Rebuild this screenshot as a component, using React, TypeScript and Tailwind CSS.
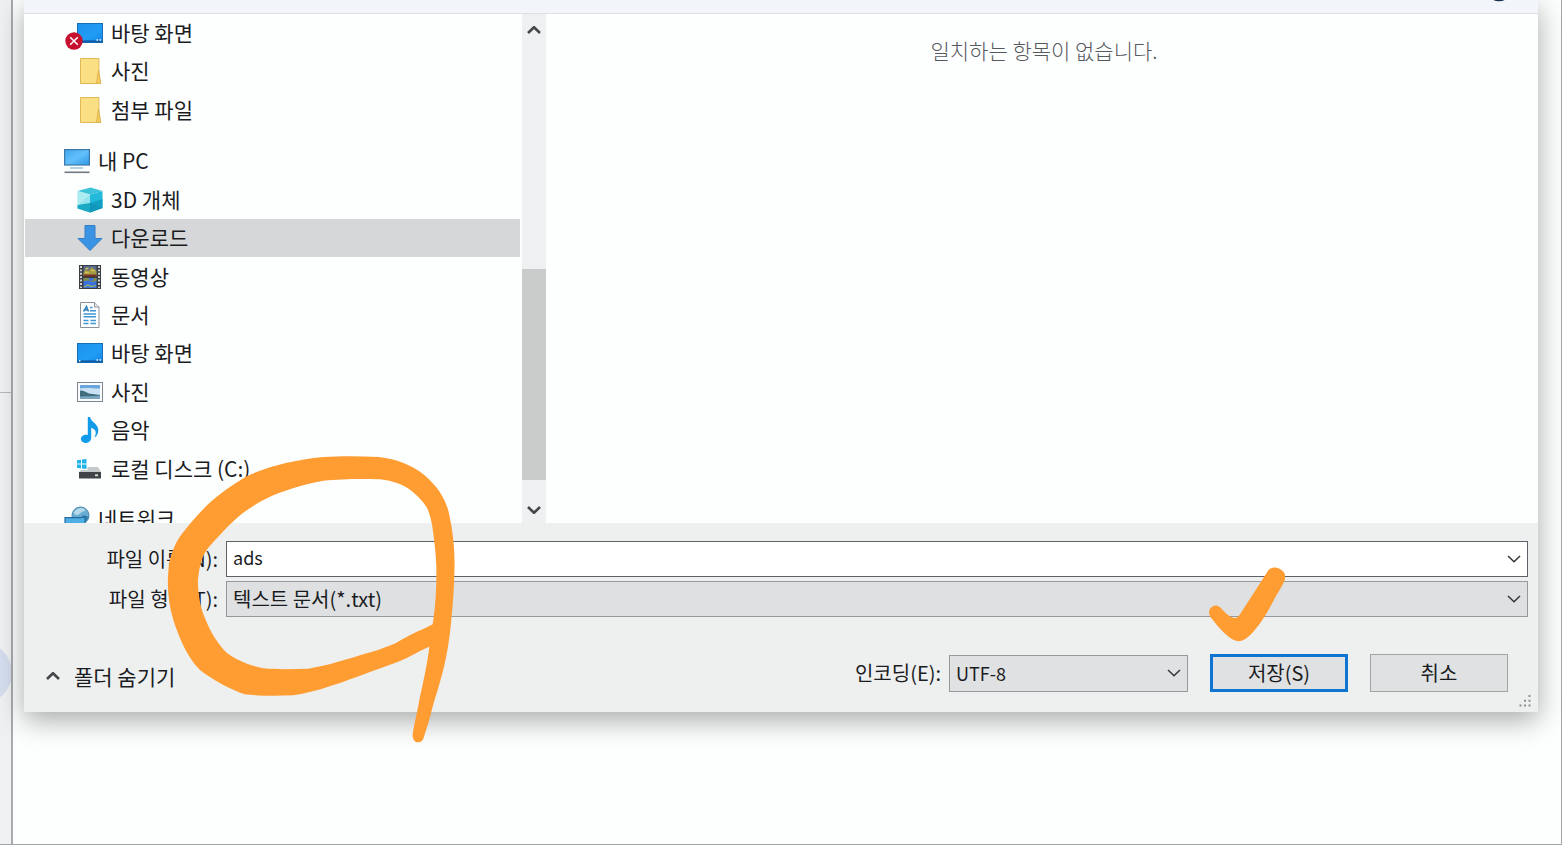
import { useState } from "react";
import type { ReactNode } from "react";

function DesktopIcon() {
  return (
    <svg viewBox="0 0 26 20" className="h-5 w-[26px]" aria-hidden="true">
      <defs>
        <linearGradient id="desk" x1="0" y1="0" x2="1" y2="1">
          <stop offset="0" stopColor="#1c93ee" />
          <stop offset="0.6" stopColor="#219cf4" />
          <stop offset="1" stopColor="#1585e6" />
        </linearGradient>
      </defs>
      <rect x="0.5" y="0.5" width="25" height="19" fill="url(#desk)" stroke="#1a6fb5" />
      <rect x="1" y="17.4" width="24" height="1.8" fill="#0f5ba8" />
      <path d="M2 17.800h1.400M19.500 17h1.600M22.500 17h1.600" stroke="#e8f4ff" strokeWidth="1.400" />
    </svg>
  );
}

function FolderIcon() {
  return (
    <svg viewBox="0 0 26 28" className="h-7 w-[26px]" aria-hidden="true">
      <path d="M3.500 1.500h18.400V17l1.600 9.500H3.500z" fill="#fbdf85" stroke="#e0b954" />
      <path d="M21.500 13 19.500 26.300h4.200z" fill="#f5cd62" stroke="#dbb04a" strokeWidth="0.900" />
    </svg>
  );
}

function PcIcon() {
  return (
    <svg viewBox="0 0 26 26" className="h-[26px] w-[26px]" aria-hidden="true">
      <defs>
        <linearGradient id="pc" x1="0" y1="0" x2="1" y2="1">
          <stop offset="0" stopColor="#3fa6ee" />
          <stop offset="0.500" stopColor="#62c0fb" />
          <stop offset="1" stopColor="#2f98e6" />
        </linearGradient>
      </defs>
      <rect x="0.600" y="1.600" width="24.800" height="15.400" fill="url(#pc)" stroke="#3b78a8" strokeWidth="1.200" />
      <path d="M6 20h13" stroke="#82b7d2" strokeWidth="1.200" />
      <path d="M0.500 24.300h25" stroke="#6d7880" strokeWidth="1.600" />
    </svg>
  );
}

function CubeIcon() {
  return (
    <svg viewBox="0 0 26 26" className="h-[26px] w-[26px]" aria-hidden="true">
      <path d="M0.500 4 13.500 0.500l12 3.500L13 7.500z" fill="#3cc3da" />
      <path d="M0.500 4 13 7.500V25.500L0.500 21.500z" fill="#93e4ec" />
      <path d="M0.500 21.500V18L13 16v9.500z" fill="#1aa9c2" />
      <path d="M0.500 4 13 7.500 0.500 19z" fill="#c3f3f6" opacity="0.550" />
      <path d="M13 7.500 25.500 4v17L13 25.500z" fill="#22b9da" />
      <path d="M13 16l12.500-4v9L13 25.500z" fill="#129fc4" />
      <path d="M13 16l12.500 5L13 25.500z" fill="#0f8fb2" opacity="0.500" />
    </svg>
  );
}

function DownloadIcon() {
  return (
    <svg viewBox="0 0 26 28" className="h-7 w-[26px]" aria-hidden="true">
      <path d="M8 1.500h10v13h7L13 26.500 1 14.500h7z" fill="#3b93e4" stroke="#347fca" />
    </svg>
  );
}

function VideoIcon() {
  return (
    <svg viewBox="0 0 26 26" className="h-[26px] w-[26px]" aria-hidden="true">
      <rect x="2" y="1" width="22" height="24" fill="#3a3d40" />
      <path d="M4 2v22M22 2v22" stroke="#e0e3e3" strokeWidth="1.800" strokeDasharray="1.900 1.500" />
      <rect x="6.500" y="2" width="13" height="10" fill="#566a92" />
      <path d="M6.500 9l2-4 3 2 3-4 5 4v5h-13z" fill="#a39a45" />
      <path d="M8.500 4.500h3M14 6.500h4M8 8.500h4" stroke="#d4c455" strokeWidth="1.400" />
      <path d="M6.500 10.500h13V12.500h-13z" fill="#7d3220" />
      <rect x="6.500" y="14" width="13" height="10" fill="#3a70e0" />
      <path d="M6.500 14h5l1 2.500 3 .500 1.500-3h2.500v3l-4 1-5-1.500-4 1z" fill="#7c8d4b" />
      <path d="M7 23l4-2 3 1.500 5-1" fill="none" stroke="#9db65b" strokeWidth="1.200" />
    </svg>
  );
}

function DocumentIcon() {
  return (
    <svg viewBox="0 0 26 26" className="h-[26px] w-[26px]" aria-hidden="true">
      <path d="M3.500 0.500h14L22 5v20.500H3.500z" fill="#fff" stroke="#8b9399" />
      <path d="M17.500 0.500V5H22" fill="#e3e8eb" stroke="#8b9399" />
      <path d="M6.500 9.500 9.500 4.500l2 5M8 8h3" fill="none" stroke="#3181bd" strokeWidth="1.500" />
      <path d="M13 5.500h2.500M13 8.700h6M6.500 12h12.500M6.500 14.800h12.500M6.500 18.500h5M13.500 18.500H19M6.500 21.500h5M13.500 21.500H19" stroke="#3e96d2" strokeWidth="1.500" />
    </svg>
  );
}

function PictureIcon() {
  return (
    <svg viewBox="0 0 26 20" className="h-5 w-[26px]" aria-hidden="true">
      <rect x="0.500" y="0.500" width="25" height="19" fill="#fafcfd" stroke="#7c868d" />
      <rect x="3" y="3" width="20" height="14" fill="#c9e1f2" />
      <path d="M3 3h20v3.500c-7 0-12-1-20 0z" fill="#6aa5dc" />
      <path d="M3 8.500c4 0 6 1.500 9 3l11 1.500v4H3z" fill="#3f6d7e" />
      <path d="M3 14.500c7-.500 14 0 20-1V17H3z" fill="#7ba5bf" />
    </svg>
  );
}

function MusicIcon() {
  return (
    <svg viewBox="0 0 26 28" className="h-7 w-[26px]" aria-hidden="true">
      <path
        d="M10.800 1h2.400c.500 3.600 3.200 4.800 5.500 7.200 3.400 3.600 3.400 8.400.300 12.300-.600.700-1.500.400-1-.500 1.700-3.600.700-6.600-3.800-8.200V21.500c0 3.300-2.500 5.500-5.600 5.500-2.800 0-4.700-1.600-4.700-3.900 0-2.900 3.300-5 6.900-4.100z"
        fill="#119be9"
      />
    </svg>
  );
}

function DiskIcon() {
  return (
    <svg viewBox="0 0 26 22" className="h-[22px] w-[26px]" aria-hidden="true">
      <path d="M0 2.300 4 1.700V5.500H0zM5 1.500 9.500 1v4.500H5zM0 6.600h4v3.800l-4-.600zM5 6.600h4.500V11L5 10.500z" fill="#1fb4ea" />
      <path d="M10.500 9H21l3 5H2l2-2h6.500z" fill="#c4c9cb" />
      <rect x="2" y="14" width="22" height="6.500" fill="#3e4448" />
      <path d="M18 17.300h3" stroke="#d4ecd9" strokeWidth="1.800" />
    </svg>
  );
}

function NetworkIcon() {
  return (
    <svg viewBox="0 0 26 26" className="h-[26px] w-[26px]" aria-hidden="true">
      <circle cx="16.500" cy="9.500" r="8.500" fill="#69aed2" stroke="#4787ad" />
      <path d="M9.500 7c2-4.500 8-7 12-3-1 2-3 1-5 3s-4 3-7 0z" fill="#b5d9ea" />
      <path d="M18 10c2-1 5 0 6.500 1-1 3-3 5-6.500 5z" fill="#327fae" />
      <path d="M1 11.600h16l4-1V23.600H1z" fill="#4eaee6" stroke="#276a9a" strokeWidth="1.200" />
    </svg>
  );
}

function ErrorBadge() {
  return (
    <svg viewBox="0 0 18 18" className="absolute top-[9px] -left-3 h-[18px] w-[18px]" aria-hidden="true">
      <circle cx="9" cy="9" r="8.700" fill="#c5112d" />
      <path d="M5.200 5.200l7.600 7.600M12.800 5.200l-7.600 7.600" stroke="#fff" strokeWidth="1.600" />
    </svg>
  );
}

function Chevron({ up = false, bold = false }: { up?: boolean; bold?: boolean }) {
  return (
    <svg viewBox="0 0 14 8" className="h-2 w-[14px]" fill="none" aria-hidden="true">
      <path
        d={up ? "M1 7 7 1.200 13 7" : "M1 1 7 6.800 13 1"}
        stroke={bold ? "#444749" : "#33363a"}
        strokeWidth={bold ? 2.6 : 1.5}
      />
    </svg>
  );
}

type Item = { label: string; icon: ReactNode; root?: boolean; error?: boolean };

const quickAccess: Item[] = [
  { label: "바탕 화면", icon: <DesktopIcon />, error: true },
  { label: "사진", icon: <FolderIcon /> },
  { label: "첨부 파일", icon: <FolderIcon /> },
];

const computer: Item[] = [
  { label: "내 PC", icon: <PcIcon />, root: true },
  { label: "3D 개체", icon: <CubeIcon /> },
  { label: "다운로드", icon: <DownloadIcon /> },
  { label: "동영상", icon: <VideoIcon /> },
  { label: "문서", icon: <DocumentIcon /> },
  { label: "바탕 화면", icon: <DesktopIcon /> },
  { label: "사진", icon: <PictureIcon /> },
  { label: "음악", icon: <MusicIcon /> },
  { label: "로컬 디스크 (C:)", icon: <DiskIcon /> },
];

const network: Item[] = [{ label: "네트워크", icon: <NetworkIcon />, root: true }];

function TreeGroup({
  items,
  className,
  selected,
  onSelect,
}: {
  items: Item[];
  className: string;
  selected?: string;
  onSelect?: (label: string) => void;
}) {
  return (
    <ul className={`grid auto-rows-fr ${className}`}>
      {items.map((item) => (
        <li key={item.label} className="flex">
          <button
            type="button"
            onClick={() => onSelect?.(item.label)}
            className={`flex flex-1 items-center gap-2 text-left ${item.root ? "pl-[39px]" : "pl-[52px]"} ${
              selected === item.label ? "bg-[#d6d7d9]" : ""
            }`}
          >
            <span className="relative shrink-0">
              {item.icon}
              {item.error && <ErrorBadge />}
            </span>
            <span className="pb-0.5">{item.label}</span>
          </button>
        </li>
      ))}
    </ul>
  );
}

export default function App() {
  const [selected, setSelected] = useState("다운로드");

  return (
    <div className="relative flex min-h-screen overflow-hidden border-r border-b border-[#a3a6a8] bg-[#fdfefe] font-['Noto_Sans_CJK_KR',sans-serif] text-[20px] leading-6 text-[#1b1c1f]">
      <aside className="flex w-[13px] shrink-0 flex-col overflow-hidden border-r-2 border-[#a9abae] bg-[#f0f1f2]">
        <div className="h-[393px] border-b border-[#b4b6b8]" />
        <div className="mt-[249px] -ml-[50px] h-[62px] w-[62px] rounded-full bg-[#d5deee]" />
      </aside>

      <main className="min-w-0 flex-1 pr-[23px] pl-[11px]">
        <div
          role="dialog"
          aria-label="저장"
          className="bg-[#eef0f0] shadow-[0_8px_26px_0_rgba(0,0,0,0.34)]"
        >
          <header className="flex h-[14px] items-start justify-end border-b border-[#dce0e4] bg-[#f2f5f9] pr-8">
            <svg viewBox="0 0 14 2" className="h-[2px] w-[14px]" aria-hidden="true">
              <ellipse cx="7" cy="-3" rx="8" ry="4.300" fill="#17304f" />
            </svg>
          </header>

          <div className="flex h-[509px] bg-[#fdfefe]">
            <nav className="w-[496px] overflow-hidden pl-px text-[21px]" aria-label="폴더">
              <TreeGroup items={quickAccess} className="h-[115px]" />
              <TreeGroup items={computer} className="mt-[13px] h-[346px]" selected={selected} onSelect={setSelected} />
              <TreeGroup items={network} className="mt-3 h-[38px]" />
            </nav>

            <div className="ml-0.5 flex w-6 flex-col items-center bg-[#eff0f1]">
              <button type="button" aria-label="위로" className="flex h-8 w-full items-center justify-center">
                <Chevron up bold />
              </button>
              <div className="mt-[223px] h-[211px] w-full bg-[#cacbcb]" />
              <button type="button" aria-label="아래로" className="mt-auto flex h-[26px] w-full items-center justify-center">
                <Chevron bold />
              </button>
            </div>

            <section className="flex-1 pt-6 pl-1 text-center">
              <p className="text-[21px] font-light text-[#55585d]">일치하는 항목이 없습니다.</p>
            </section>
          </div>

          <form onSubmit={(e) => e.preventDefault()} className="relative pt-[18px] pb-5">
            <div className="grid grid-cols-[194px_1fr] items-center gap-x-2 gap-y-1 pr-[10px]">
              <label htmlFor="name" className="text-right whitespace-nowrap">
                파일 이름(N):
              </label>
              <div className="flex h-9 items-center border border-[#5e6268] bg-white">
                <input
                  id="name"
                  defaultValue="ads"
                  className="h-full min-w-0 flex-1 bg-transparent px-1.5 pb-1 text-[18px] outline-none"
                />
                <button type="button" aria-label="목록 열기" className="flex h-full w-[26px] items-center justify-center">
                  <Chevron />
                </button>
              </div>

              <label htmlFor="type" className="text-right whitespace-nowrap">
                파일 형식(T):
              </label>
              <div className="relative">
                <select
                  id="type"
                  className="block h-9 w-full appearance-none border border-[#96999b] bg-[#dfe0e1] px-1.5"
                >
                  <option>텍스트 문서(*.txt)</option>
                </select>
                <span className="pointer-events-none absolute inset-y-0 right-0 flex w-7 items-center justify-center">
                  <Chevron />
                </span>
              </div>
            </div>

            <div className="flex h-[75px] items-end justify-between pr-[30px] pl-[22px]">
              <button type="button" className="flex h-8 items-center gap-[14px] text-[21px]">
                <Chevron up bold />
                폴더 숨기기
              </button>
              <div className="flex items-center">
                <label htmlFor="encoding" className="mr-2">
                  인코딩(E):
                </label>
                <div className="relative mr-[22px]">
                  <select
                    id="encoding"
                    className="block h-[37px] w-[239px] appearance-none border border-[#96999b] bg-[#e0e1e2] px-1.5 text-[18px]"
                  >
                    <option>UTF-8</option>
                  </select>
                  <span className="pointer-events-none absolute inset-y-0 right-0 flex w-7 items-center justify-center">
                    <Chevron />
                  </span>
                </div>
                <button type="submit" className="mr-[22px] h-[38px] w-[138px] border-3 border-[#0f75d3] bg-[#e0e1e2]">
                  저장(S)
                </button>
                <button type="button" className="h-[38px] w-[138px] border border-[#a0a2a4] bg-[#e0e1e2]">
                  취소
                </button>
              </div>
            </div>

            <svg viewBox="0 0 12 12" className="absolute right-[7px] bottom-[5px] h-3 w-3" fill="#8c8f91" aria-hidden="true">
              <path d="M9.500 0h2v2h-2zM5 4.800h2v2H5zM9.500 4.800h2v2h-2zM.500 9.500h2v2h-2zM5 9.500h2v2H5zM9.500 9.500h2v2h-2z" />
            </svg>
          </form>
        </div>
      </main>

      <svg
        viewBox="0 0 990 930"
        className="pointer-events-none absolute top-[440px] left-[150px] h-[310px] w-[330px]"
        aria-hidden="true"
      >
        <path
          fillRule="evenodd"
          fill="#ff9d33"
          d="M805 907C794 907 787 897 788 882C795 840 803 810 808 780C822 715 832 670 838 620C805 634 785 647 762 658C720 676 680 689 650 700C590 722 500 757 430 766C380 768 330 768 284 763C240 748 180 715 150 690C105 645 82 575 70 540C52 480 50 420 58 370C64 335 78 305 96 281C120 250 150 215 184 184C230 146 260 127 290 109C350 80 430 60 520 51C570 48 630 48 686 51C740 57 790 77 822 104C870 145 890 185 898 225C910 280 916 340 913 400C912 455 907 510 903 550C898 600 890 650 882 680C870 730 855 775 848 800C838 840 830 865 822 890C819 901 813 907 805 907ZM848 553C856 500 860 450 859 380C858 350 855 320 851 290C847 250 840 222 830 202C818 182 800 165 784 152C760 135 730 122 690 118C640 116 570 117 520 122C480 128 420 145 370 166C330 183 300 203 275 222C240 250 200 295 172 327C155 350 148 380 144 420C143 460 152 505 164 532C180 575 205 615 230 638C255 658 300 677 340 685C390 689 430 687 475 686C530 678 600 655 650 640C690 628 710 620 734 611C765 592 795 577 820 567Z"
        />
      </svg>

      <svg
        viewBox="0 0 240 240"
        className="pointer-events-none absolute top-[563px] left-[1205px] h-20 w-20"
        aria-hidden="true"
      >
        <path
          fill="#ff9d33"
          d="M28 128C40 126 48 135 56 144C67 156 78 164 88 165C96 165 101 160 105 154L152 81C163 64 177 41 187 26C194 16 204 11 215 14C233 18 245 33 240 49C234 67 221 85 211 103C198 127 184 154 170 174C155 196 138 216 122 227C109 237 94 236 82 229C60 216 39 191 19 166C8 153 10 132 28 128Z"
        />
      </svg>
    </div>
  );
}
